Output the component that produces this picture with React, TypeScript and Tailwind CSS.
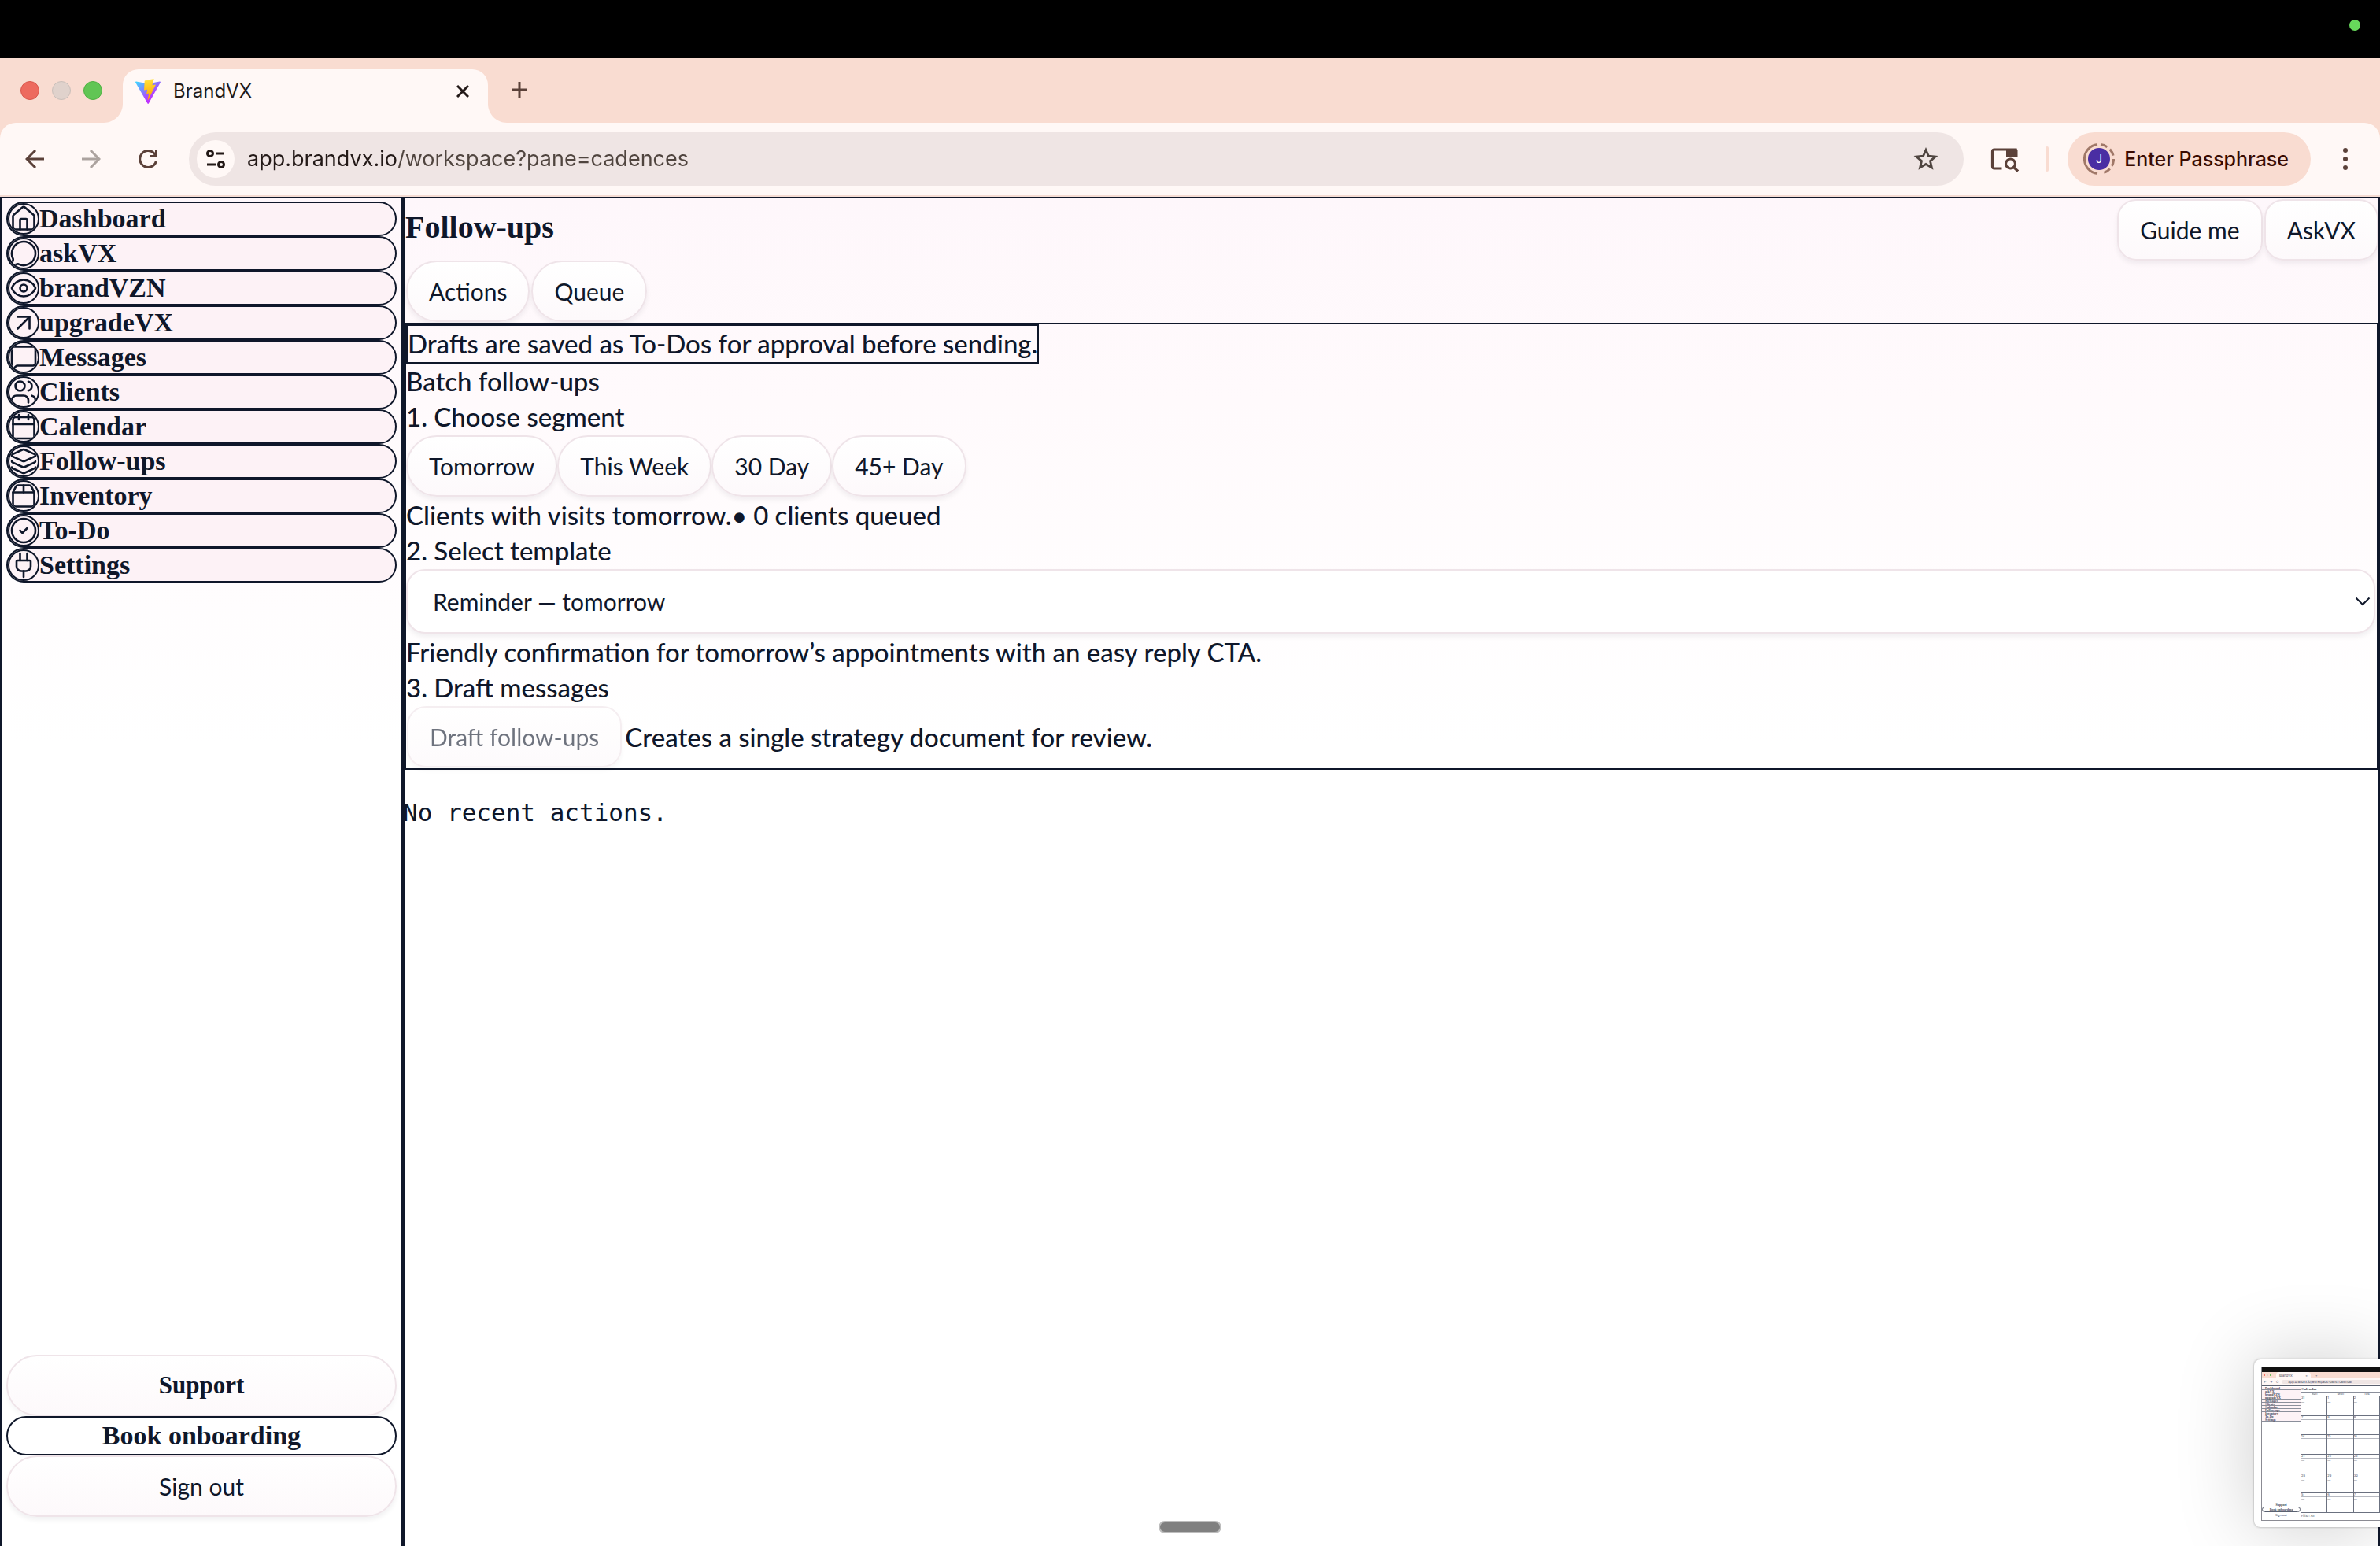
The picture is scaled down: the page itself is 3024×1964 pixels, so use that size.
import { useState } from "react";
import type { ReactNode } from "react";
import {
  ArrowUpRight,
  Calendar,
  CircleCheck,
  Eye,
  House,
  Layers,
  MessageCircle,
  MessageSquare,
  Package2,
  Plug,
  Users,
} from "lucide-react";
import type { LucideIcon } from "lucide-react";

const NAV: { label: string; icon: LucideIcon }[] = [
  { label: "Dashboard", icon: House },
  { label: "askVX", icon: MessageCircle },
  { label: "brandVZN", icon: Eye },
  { label: "upgradeVX", icon: ArrowUpRight },
  { label: "Messages", icon: MessageSquare },
  { label: "Clients", icon: Users },
  { label: "Calendar", icon: Calendar },
  { label: "Follow-ups", icon: Layers },
  { label: "Inventory", icon: Package2 },
  { label: "To-Do", icon: CircleCheck },
  { label: "Settings", icon: Plug },
];

const SEGMENTS = ["Tomorrow", "This Week", "30 Day", "45+ Day"];

function ViteLogo({ className }: { className: string }) {
  return (
    <svg viewBox="0 0 256 257" className={className} aria-hidden="true">
      <defs>
        <linearGradient id="vite-a" x1="-.8%" x2="57.6%" y1="7.7%" y2="78.4%">
          <stop offset="0%" stopColor="#41D1FF" />
          <stop offset="100%" stopColor="#BD34FE" />
        </linearGradient>
        <linearGradient id="vite-b" x1="43.4%" x2="50.3%" y1="2.2%" y2="89%">
          <stop offset="0%" stopColor="#FFEA83" />
          <stop offset="8.3%" stopColor="#FFDD35" />
          <stop offset="100%" stopColor="#FFA800" />
        </linearGradient>
      </defs>
      <path
        fill="url(#vite-a)"
        d="M255.153 37.938 134.897 252.976c-2.483 4.44-8.862 4.466-11.382.048L.875 37.958c-2.746-4.814 1.371-10.646 6.827-9.67l120.385 21.517a6.537 6.537 0 0 0 2.322-.004l117.867-21.483c5.438-.991 9.574 4.796 6.877 9.62Z"
      />
      <path
        fill="url(#vite-b)"
        d="M185.432.063 96.44 17.501a3.268 3.268 0 0 0-2.634 3.014l-5.474 92.456a3.268 3.268 0 0 0 3.997 3.378l24.777-5.718c2.318-.535 4.413 1.507 3.936 3.838l-7.361 36.047c-.495 2.426 1.782 4.5 4.151 3.78l15.304-4.649c2.372-.72 4.652 1.36 4.15 3.788l-11.698 56.621c-.732 3.542 3.979 5.473 5.943 2.437l1.313-2.028 72.516-144.72c1.215-2.423-.88-5.186-3.54-4.672l-25.505 4.922c-2.396.462-4.435-1.77-3.759-4.114l16.646-57.705c.677-2.35-1.37-4.583-3.769-4.113Z"
      />
    </svg>
  );
}

function TabFoot({ flip }: { flip?: boolean }) {
  return (
    <svg viewBox="0 0 24 24" className={flip ? "size-6 -scale-x-100 self-end" : "size-6 self-end"} aria-hidden="true">
      <path d="M24 0v24H0C13 24 24 13 24 0Z" fill="#fff8f6" />
    </svg>
  );
}

function Browser() {
  return (
    <header className="shrink-0 font-['Inter',sans-serif]">
      <div className="flex h-[74px] items-center justify-end bg-black pr-[25px] pb-[10px]">
        <span className="size-[14px] rounded-full bg-[#67d85b]" />
      </div>
      <div className="flex h-[82px] items-end bg-[#f9dcd1]">
        <div className="flex h-[82px] items-center gap-4 pl-[26px]">
          <button aria-label="Close window" className="size-6 rounded-full border border-[#d8574c] bg-[#ed6a5e]" />
          <button aria-label="Minimise window" className="size-6 rounded-full border border-[#cabfba] bg-[#e0d2cc]" />
          <button aria-label="Zoom window" className="size-6 rounded-full border border-[#50b043] bg-[#61c554]" />
        </div>
        <div className="ml-0.5 flex h-[68px] items-stretch">
          <TabFoot />
          <div className="flex w-[464px] items-center rounded-t-[20px] bg-[#fff8f6] pr-6 pb-3 pl-4">
            <ViteLogo className="size-8" />
            <span className="ml-4 flex-1 text-[24px] leading-8 text-[#231917]">BrandVX</span>
            <button aria-label="Close tab">
              <svg viewBox="0 0 16 16" className="size-4" fill="none" stroke="#231917" strokeWidth="3">
                <path d="M1 1l14 14M15 1L1 15" />
              </svg>
            </button>
          </div>
          <TabFoot flip />
        </div>
        <button aria-label="New tab" className="mb-8 ml-[6px]">
          <svg viewBox="0 0 20 20" className="size-5" fill="none" stroke="#5b4139" strokeWidth="3">
            <path d="M10 0v20M0 10h20" />
          </svg>
        </button>
      </div>
      <div className="bg-[#f9dcd1]">
        <div className="flex h-[92px] items-center rounded-t-[20px] bg-[#fff8f6] pr-10 pl-8">
          <button aria-label="Back">
            <svg viewBox="0 0 24 24" className="size-6" fill="none" stroke="#5b4139" strokeWidth="3">
              <path d="M24 12H3M13 1L2 12l11 11" />
            </svg>
          </button>
          <button aria-label="Forward" className="ml-12">
            <svg viewBox="0 0 24 24" className="size-6" fill="none" stroke="#aca39f" strokeWidth="3">
              <path d="M0 12h21M11 1l11 11-11 11" />
            </svg>
          </button>
          <button aria-label="Reload" className="ml-12">
            <svg viewBox="0 0 24 24" className="size-6" fill="none" stroke="#5b4139" strokeWidth="3">
              <path d="M22.300 15A10.500 10.500 0 1 1 20 5l2 2.500" />
              <path d="M22.500 0v8.500H14" />
            </svg>
          </button>
          <div className="ml-10 flex h-[68px] flex-1 items-center rounded-full bg-[#efe5e4] pr-8 pl-[10px]">
            <button aria-label="View site information" className="flex size-12 items-center justify-center rounded-full bg-[#fff8f6]">
              <svg viewBox="0 0 24 24" className="size-6" fill="none" stroke="#231917" strokeWidth="3">
                <circle cx="5" cy="5" r="3.500" />
                <path d="M12 5h11M1 19h11" />
                <circle cx="19" cy="19" r="3.500" />
              </svg>
            </button>
            <input
              aria-label="Address"
              defaultValue="app.brandvx.io/workspace?pane=cadences"
              className="ml-4 min-w-0 flex-1 bg-[linear-gradient(90deg,#231917_190px,#50453f_190px)] bg-clip-text text-[27px] leading-10 text-transparent outline-none"
            />
            <button aria-label="Bookmark this tab">
              <svg viewBox="0 0 32 32" className="size-8" fill="none" stroke="#4f4540" strokeWidth="2.800">
                <path d="M16 4.500l3.400 7.700 8.600.8-6.500 5.600 1.900 8.300L16 22.500l-7.400 4.400 1.900-8.300L4 13l8.600-.8z" />
              </svg>
            </button>
          </div>
          <button aria-label="Search side panel" className="ml-[34px]">
            <svg viewBox="0 0 36 32" className="h-8 w-9" fill="none" stroke="#5b4139" strokeWidth="3.200">
              <path d="M14.500 28H5a2.500 2.500 0 0 1-2.500-2.500v-19A2.500 2.500 0 0 1 5 4h27v9" />
              <path d="M20 3h12a2.500 2.500 0 0 1 2.500 2.500V14H20z" fill="#5b4139" stroke="none" />
              <circle cx="25.500" cy="22" r="6" />
              <path d="M29.500 26.500l5.500 5" />
            </svg>
          </button>
          <span className="ml-[34px] h-8 w-1 rounded-full bg-[#f9dcd1]" />
          <button className="ml-6 flex h-[68px] items-center gap-3 rounded-full bg-[#f9dcd1] pr-7 pl-5">
            <svg viewBox="0 0 40 40" className="size-10" fill="none" aria-hidden="true">
              <path d="M18 1.600A18.500 18.500 0 0 0 18 38.400" stroke="#a07868" strokeWidth="3" />
              <path d="M22 1.600A18.500 18.500 0 0 1 22 38.400" stroke="#a07868" strokeWidth="3" strokeDasharray="9 4.500" />
              <circle cx="20" cy="20" r="14" fill="#4a2ea3" />
              <text x="20" y="25" textAnchor="middle" fontSize="14" fill="#fff">
                J
              </text>
            </svg>
            <span className="text-[25px] leading-8 font-medium text-[#3a0b01]">Enter Passphrase</span>
          </button>
          <button aria-label="Menu" className="ml-10">
            <svg viewBox="0 0 8 32" className="h-8 w-2" fill="#5b4139">
              <circle cx="4" cy="5" r="3" />
              <circle cx="4" cy="16" r="3" />
              <circle cx="4" cy="27" r="3" />
            </svg>
          </button>
        </div>
      </div>
      <div className="h-0.5 bg-[#f5dcd3]" />
    </header>
  );
}

function Pill({ children, square, disabled }: { children: ReactNode; square?: boolean; disabled?: boolean }) {
  return (
    <button
      disabled={disabled}
      className={`h-[78px] border-2 border-[#efe4e9] bg-linear-to-b from-white to-[#fdf9fb] px-[27px] text-[30px] leading-10 whitespace-nowrap shadow-[0_4px_6px_rgba(15,23,42,0.06)] disabled:opacity-60 ${
        square ? "rounded-3xl" : "rounded-full"
      }`}
    >
      {children}
    </button>
  );
}

function Sidebar() {
  return (
    <aside className="flex w-[512px] shrink-0 flex-col justify-between border-2 border-b-0 border-[#0f172a] px-[6px] pt-1 pb-[37px] font-['Liberation_Serif',serif] font-bold">
      <nav className="flex flex-col">
        {NAV.map(({ label, icon: Icon }) => (
          <button
            key={label}
            className="flex h-11 items-center rounded-full border-2 border-[#0f172a] bg-[#fdf2f6] text-[34px] leading-10"
          >
            <span className="flex size-10 items-center justify-center overflow-hidden rounded-full border-2 border-[#0f172a]">
              <Icon className="size-9 shrink-0" strokeWidth={1.75} />
            </span>
            <span>{label}</span>
          </button>
        ))}
      </nav>
      <div className="flex flex-col">
        <button className="h-[78px] rounded-full border-2 border-[#efe4e9] bg-linear-to-b from-white to-[#fdf9fb] text-[31px] shadow-[0_4px_6px_rgba(15,23,42,0.04)]">
          Support
        </button>
        <a
          href="#onboarding"
          className="flex h-[50px] items-center justify-center rounded-full border-2 border-[#0f172a] bg-white text-[34px] leading-10"
        >
          Book onboarding
        </a>
        <button className="h-[78px] rounded-full border-2 border-[#efe4e9] bg-linear-to-b from-white to-[#fdf9fb] font-['Lato',sans-serif] text-[30px] font-normal shadow-[0_4px_6px_rgba(15,23,42,0.06)]">
          Sign out
        </button>
      </div>
    </aside>
  );
}

function FollowUps() {
  const [template, setTemplate] = useState("tomorrow");
  return (
    <main className="flex min-w-0 flex-1 flex-col border-x-2 border-t-2 border-[#0f172a] font-['Lato',sans-serif] text-[33px] leading-[45px] font-medium">
      <div className="flex items-start justify-between pt-px">
        <h1 className="pt-2 pl-px font-['Liberation_Serif',serif] text-[40px] leading-[56px] font-bold">Follow-ups</h1>
        <div className="flex gap-0.5 font-normal">
          <Pill square>Guide me</Pill>
          <Pill square>AskVX</Pill>
        </div>
      </div>
      <div className="flex gap-0.5 pb-px pl-0.5 font-normal">
        <Pill>Actions</Pill>
        <Pill>Queue</Pill>
      </div>
      <section className="flex flex-col border-2 border-[#0f172a]">
        <p className="h-[50px] self-start border-2 border-[#0f172a]">
          Drafts are saved as To-Dos for approval before sending.
        </p>
        <h2>Batch follow-ups</h2>
        <h3>1. Choose segment</h3>
        <div className="flex py-px font-normal">
          {SEGMENTS.map((s) => (
            <Pill key={s}>{s}</Pill>
          ))}
        </div>
        <p>Clients with visits tomorrow.• 0 clients queued</p>
        <label htmlFor="template">2. Select template</label>
        <div className="relative flex py-px pr-0.5">
          <select
            id="template"
            value={template}
            onChange={(e) => setTemplate(e.target.value)}
            className="h-[82px] flex-1 appearance-none rounded-3xl border-2 border-[#efe4e9] bg-white px-8 text-[30px] font-normal shadow-[0_4px_6px_rgba(15,23,42,0.06)]"
          >
            <option value="tomorrow">Reminder — tomorrow</option>
          </select>
          <svg
            viewBox="0 0 20 12"
            className="pointer-events-none absolute top-9 right-2 h-3 w-5"
            fill="none"
            stroke="#0f172a"
            strokeWidth="2"
          >
            <path d="M1.500 1.500L10 10l8.500-8.500" />
          </svg>
        </div>
        <p>Friendly confirmation for tomorrow’s appointments with an easy reply CTA.</p>
        <h3>3. Draft messages</h3>
        <div className="flex items-center gap-1 py-px pl-px">
          <div className="flex font-normal">
            <Pill square disabled>
              Draft follow-ups
            </Pill>
          </div>
          <p>Creates a single strategy document for review.</p>
        </div>
      </section>
      <pre className="mt-8 -ml-0.5 font-['DejaVu_Sans_Mono',monospace] text-[31px] leading-[45px] font-normal">
        No recent actions.
      </pre>
    </main>
  );
}

const WEEKS = [
  ["31", "1", "2"],
  ["7", "8", "9"],
  ["14", "15", "16"],
  ["21", "22", "23"],
  ["28", "29", "30"],
  ["5", "6", "7"],
];

function CapturePreview() {
  return (
    <div className="absolute right-0 bottom-6 w-40 rounded-l-lg bg-white pt-[9px] pb-2 pl-[9px] shadow-[0_0_3px_rgba(0,0,0,0.35),0_0_100px_rgba(0,0,0,0.2)]">
      <div className="flex h-[196px] flex-col overflow-hidden border border-r-0 border-[#8b8b93] bg-white font-['Inter',sans-serif] text-[4px] leading-[5px] text-[#3c4455]">
        <div className="h-[6px] shrink-0 bg-[#111]" />
        <div className="flex h-2 shrink-0 items-center gap-[2px] bg-[#f9dcd1] pl-[2px]">
          <span className="size-[2px] rounded-full bg-[#ed4a3e]" />
          <span className="size-[2px] rounded-full bg-[#d8cdc8]" />
          <span className="size-[2px] rounded-full bg-[#41b534]" />
          <span className="ml-1 flex w-11 items-center justify-between self-stretch rounded-t-sm bg-[#fff8f6] px-1">
            <span>BrandVX</span>
            <span>×</span>
          </span>
          <span className="pl-1">+</span>
        </div>
        <div className="flex h-[9px] shrink-0 items-center gap-1 bg-[#fff8f6] pl-[2px]">
          <span>←</span>
          <span>→</span>
          <span>↻</span>
          <span className="flex-1 overflow-hidden rounded-l-full bg-[#efe5e4] pl-2 whitespace-nowrap">
            app.brandvx.io/workspace?pane=calendar
          </span>
        </div>
        <div className="flex min-h-0 flex-1 border-t border-[#5b6170]">
          <div className="flex w-[50px] shrink-0 flex-col justify-between border-r border-[#3c4455] font-['Liberation_Serif',serif] font-bold">
            <div className="pt-px">
              {NAV.map(({ label }) => (
                <div key={label} className="flex h-[4px] items-center border-b border-[#8b8f9b] bg-[#fdf2f6] pl-1 leading-[4px]">
                  {label}
                </div>
              ))}
            </div>
            <div className="pb-1 text-center">
              <div>Support</div>
              <div className="rounded-full border border-[#5b6170]">Book onboarding</div>
              <div className="pt-px font-['Lato',sans-serif] font-normal">Sign out</div>
            </div>
          </div>
          <div className="flex min-w-0 flex-1 flex-col">
            <div className="pt-px font-['Liberation_Serif',serif] text-[5px] leading-[6px] font-bold">Calendar</div>
            <div className="grid grid-cols-3 border-y border-[#8b8f9b] text-center leading-[4px]">
              <span>Sun</span>
              <span>Mon</span>
              <span>Tue</span>
            </div>
            <div className="grid flex-1 grid-cols-3">
              {WEEKS.flat().map((d, i) => (
                <div key={i} className="border-r border-b border-[#6b7180]">
                  <div className="border-b border-[#b6b9c1] leading-[4px]">{d}</div>
                  <div>—</div>
                </div>
              ))}
            </div>
            <div className="h-[9px] pt-px">Filter: All</div>
          </div>
        </div>
      </div>
    </div>
  );
}

export default function App() {
  return (
    <div className="relative flex h-screen w-full flex-col overflow-hidden bg-white text-[#0f172a]">
      <Browser />
      <div className="flex min-h-0 flex-1 bg-[linear-gradient(180deg,#fef7fb_0px,#fffafc_260px,#ffffff_700px)]">
        <Sidebar />
        <FollowUps />
      </div>
      <span className="absolute bottom-4 left-1/2 h-4 w-20 -translate-x-1/2 rounded-full border-2 border-[#bdbdbd] bg-[#808080]" />
      <CapturePreview />
    </div>
  );
}
